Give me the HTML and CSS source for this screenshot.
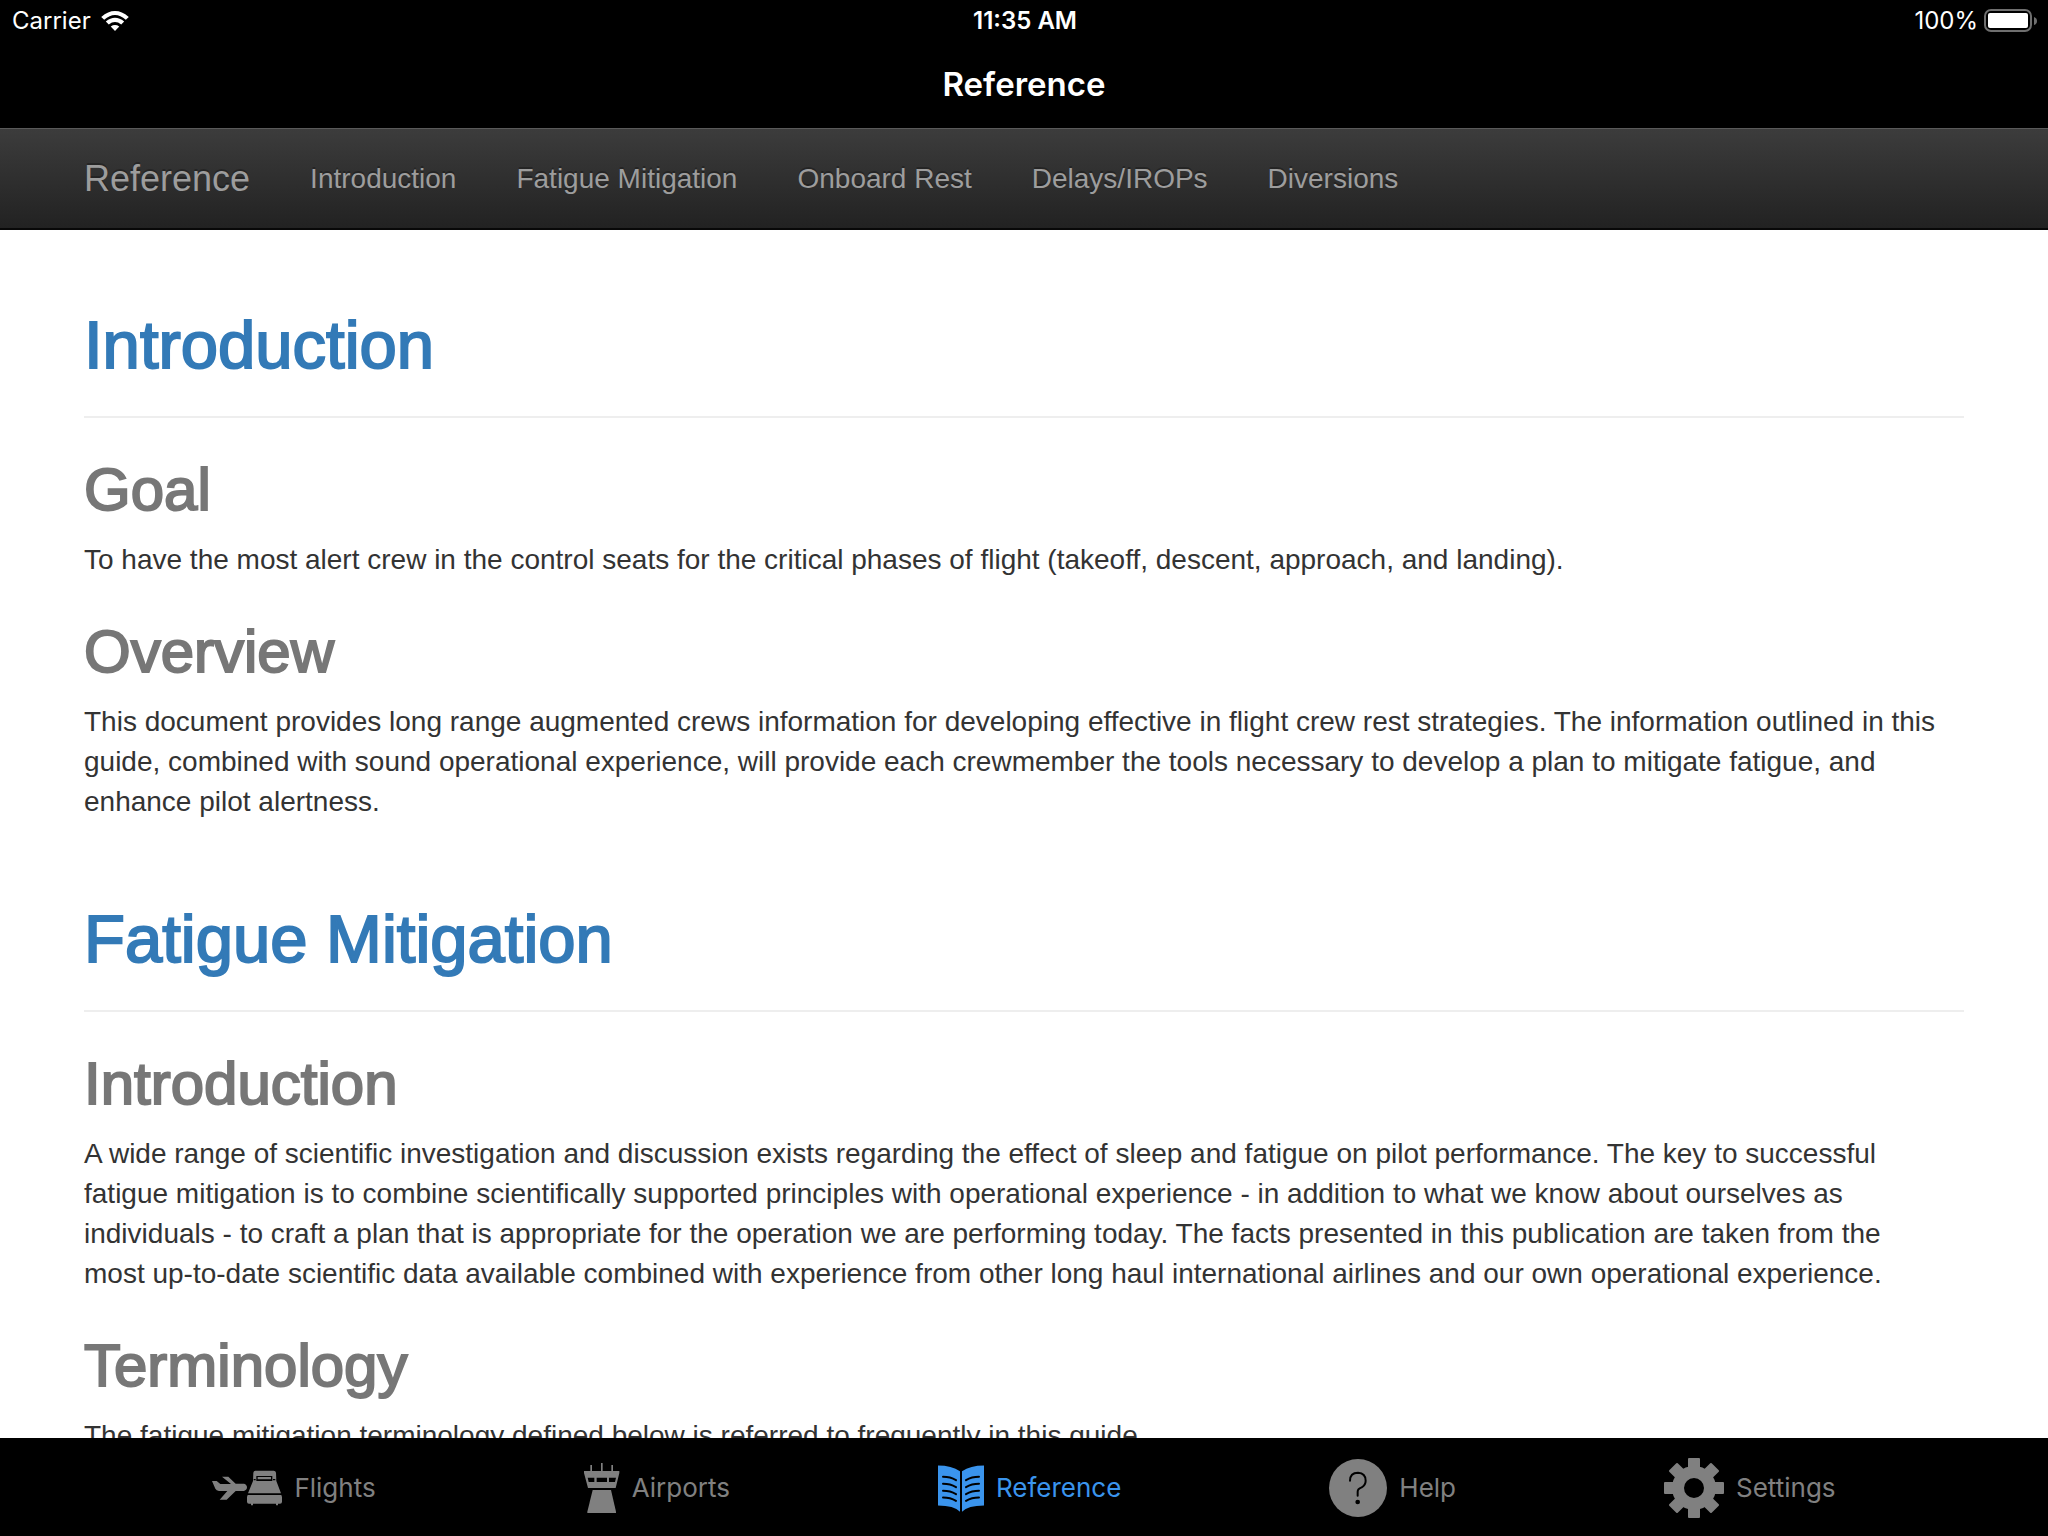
FILE: index.html
```html
<!DOCTYPE html>
<html lang="en">
<head>
  <meta charset="UTF-8" />
  <meta name="viewport" content="width=device-width, initial-scale=1.0" />
  <title>Reference</title>
  <link rel="stylesheet" href="styles.css">
</head>
<body>
  <header class="top-bar">
    <div class="status">
      <div class="status-left">
        <span>Carrier</span>
        <svg width="28" height="20" viewBox="303 29 84 61" fill="#fff">
          <path d="M303 47Q345 11 387 47L378 56Q345 26 312 56Z"/>
          <path d="M317 61Q345 38 373 61L364 70Q345 55 326 70Z"/>
          <path d="M332 76Q345 67 358 76L345 90Z"/>
        </svg>
      </div>
      <div class="status-time">11:35 AM</div>
      <div class="status-right">
        <span>100%</span>
        <svg width="54" height="24" viewBox="0 0 54 24">
          <rect x="1" y="1" width="46" height="21" rx="6" fill="none" stroke="#6f6f6f" stroke-width="2"/>
          <rect x="4" y="4" width="40" height="15" rx="2" fill="#fff"/>
          <path d="M50 8Q53 9 53 12Q53 15 50 16Z" fill="#6f6f6f"/>
        </svg>
      </div>
    </div>
    <div class="title">Reference</div>
  </header>

  <nav class="navbar">
    <a class="brand" href="#">Reference</a>
    <a href="#introduction">Introduction</a>
    <a href="#fatigue">Fatigue Mitigation</a>
    <a href="#rest">Onboard Rest</a>
    <a href="#delays">Delays/IROPs</a>
    <a href="#diversions">Diversions</a>
  </nav>

  <main class="content">
    <section id="introduction">
      <h1>Introduction</h1>
      <h2>Goal</h2>
      <p>To have the most alert crew in the control seats for the critical phases of flight (takeoff, descent, approach, and landing).</p>
      <h2>Overview</h2>
      <p>This document provides long range augmented crews information for developing effective in flight crew rest strategies. The information outlined in this guide, combined with sound operational experience, will provide each crewmember the tools necessary to develop a plan to mitigate fatigue, and enhance pilot alertness.</p>
    </section>
    <section id="fatigue">
      <h1>Fatigue Mitigation</h1>
      <h2>Introduction</h2>
      <p>A wide range of scientific investigation and discussion exists regarding the effect of sleep and fatigue on pilot performance. The key to successful fatigue mitigation is to combine scientifically supported principles with operational experience - in addition to what we know about ourselves as individuals - to craft a plan that is appropriate for the operation we are performing today. The facts presented in this publication are taken from the<br> most up-to-date scientific data available combined with experience from other long haul international airlines and our own operational experience.</p>
      <h2>Terminology</h2>
      <p>The fatigue mitigation terminology defined below is referred to frequently in this guide.</p>
    </section>
  </main>

  <nav class="tab-bar">
    <a href="#">
      <svg width="70" height="36" viewBox="27 118 210 108" fill="currentColor">
        <path d="M27 151H41L52 160H84L57 138H76L98 159H123Q132 162 132 170Q132 178 123 181H98L71 207H50L73 181H48Q40 180 37 174Z"/>
        <path fill-rule="evenodd" d="M157 120H212Q218 120 219 126L220 151L234 188H135L150 151L151 126Q152 120 157 120ZM160 136V151H208V136ZM152 145V149H158V145ZM210 145V149H217V145Z"/>
        <path d="M164 139H204V146H164ZM134 193H235L237 199V213Q237 219 231 219H225V224H219V219H150V224H144V219H138Q132 219 132 213V199Z"/>
      </svg>
      <span>Flights</span>
    </a>
    <a href="#">
      <svg width="36" height="50" viewBox="66 99 108 150" fill="currentColor">
        <path d="M85 105H90V123H117V99H122V123H148V105H153V123H172V129L161 174H78L66 129V123H85Z"/>
        <path d="M77 143H97V156H80ZM104 143H135V156H104ZM141 143H162L159 156H141Z" fill="#000"/>
        <path d="M92 180H147L162 245V249H76V245Z"/>
      </svg>
      <span>Airports</span>
    </a>
    <a class="active" href="#">
      <svg width="46" height="47" viewBox="51 101 138 140" fill="currentColor">
        <path d="M51 102Q92 102 117 119V241Q99 222 51 222Z"/>
        <path d="M189 102Q148 102 123 119V241Q141 222 189 222Z"/>
        <g fill="none" stroke="#000" stroke-width="6" stroke-linecap="round">
          <path d="M66 136Q88 136 105 146M66 157Q88 157 105 167M66 178Q88 178 105 188M66 198Q88 198 105 208"/>
          <path d="M174 136Q152 136 135 146M174 157Q152 157 135 167M174 178Q152 178 135 188M174 198Q152 198 135 208"/>
        </g>
      </svg>
      <span>Reference</span>
    </a>
    <a href="#">
      <svg width="58" height="58" viewBox="54 90 174 174" fill="currentColor">
        <circle cx="141" cy="177" r="87"/>
        <path d="M117 155Q117 131 141 131Q164 132 164 155Q164 168 152 175Q140 179 140 188V200" fill="none" stroke="#000" stroke-width="6" stroke-linecap="round"/>
        <circle cx="140" cy="219" r="7" fill="#000"/>
      </svg>
      <span>Help</span>
    </a>
    <a href="#">
      <svg width="60" height="60" viewBox="-90 -90 180 180" fill="currentColor">
        <circle r="48" fill="none" stroke="currentColor" stroke-width="36"/>
        <g id="teeth">
          <rect x="-18" y="-90" width="36" height="34" rx="3"/>
          <rect x="-18" y="56" width="36" height="34" rx="3"/>
          <rect x="-90" y="-18" width="34" height="36" rx="3"/>
          <rect x="56" y="-18" width="34" height="36" rx="3"/>
        </g>
        <use href="#teeth" transform="rotate(45)"/>
      </svg>
      <span>Settings</span>
    </a>
  </nav>
</body>
</html>
```
FILE: styles.css
```css
* {
  box-sizing: border-box;
}
body {
  margin: 0;
  height: 100vh;
  display: flex;
  flex-direction: column;
  background: #fff;
  color: #333;
  font-family: "Liberation Sans", Arial, sans-serif;
  font-size: 28px;
  line-height: 40px;
}
a {
  color: inherit;
  text-decoration: none;
}
svg {
  display: block;
  flex: none;
}

/* status bar and title */
.top-bar {
  flex: none;
  height: 128px;
  background: #000;
  color: #fff;
  font-family: Inter, sans-serif;
}
.status {
  display: grid;
  grid-template-columns: 1fr auto 1fr;
  align-items: center;
  height: 42px;
  padding: 0 10px 0 12px;
  font-size: 24px;
}
.status-left,
.status-right {
  display: flex;
  align-items: center;
  gap: 10px;
}
.status-right {
  justify-content: flex-end;
  gap: 6px;
}
.status-time {
  font-weight: 600;
}
.title {
  padding-top: 22px;
  text-align: center;
  font-size: 33px;
  font-weight: 600;
}

/* section links */
.navbar {
  flex: none;
  position: relative;
  display: flex;
  align-items: center;
  gap: 60px;
  height: 100px;
  padding: 0 84px;
  border-top: 1px solid #5a5a5a;
  background: linear-gradient(#3c3c3c, #222);
  box-shadow: 0 2px #080808;
  color: #9d9d9d;
  text-shadow: 0 -2px rgba(0, 0, 0, 0.25);
}
.brand {
  font-size: 36px;
}

/* document */
.content {
  flex: 1;
  min-height: 0;
  overflow: hidden;
  padding: 0 84px;
}
section {
  padding-top: 80px;
}
h1,
h2 {
  font-weight: 400;
  -webkit-text-stroke: 2px;
}
h1 {
  margin: 0 0 40px;
  padding-bottom: 34px;
  border-bottom: 2px solid #eee;
  color: #337ab7;
  font-size: 67px;
  line-height: 74px;
}
h2 {
  margin: 40px 0 18px;
  color: #777;
  font-size: 60px;
  line-height: 64px;
}
p {
  margin: 0;
}

/* bottom tabs */
.tab-bar {
  flex: none;
  display: flex;
  justify-content: center;
  gap: 208px;
  height: 98px;
  padding-top: 2px;
  background: #000;
  color: #808080;
  font-family: Inter, sans-serif;
  font-size: 26px;
}
.tab-bar a {
  display: flex;
  align-items: center;
  gap: 12px;
}
.tab-bar .active {
  color: #3a94ed;
}
```
